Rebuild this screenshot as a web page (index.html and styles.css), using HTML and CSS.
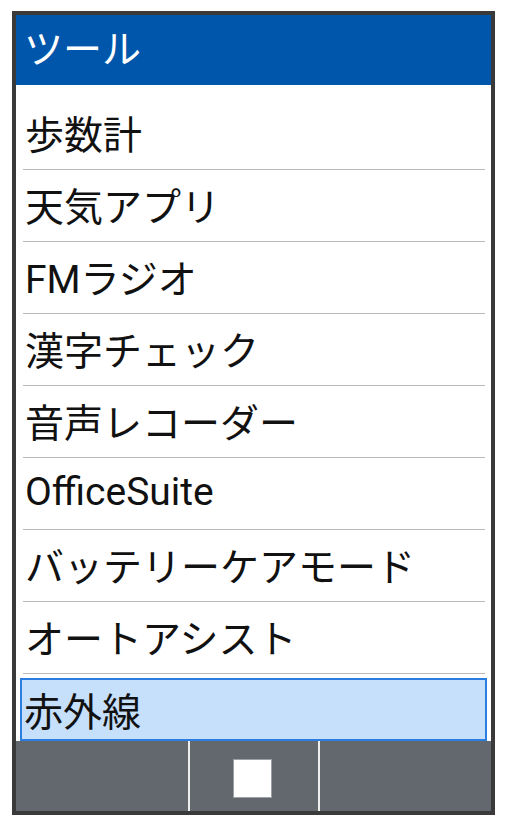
FILE: index.html
```html
<!DOCTYPE html>
<html lang="ja">
<head>
<meta charset="utf-8">
<title>ツール</title>
<link rel="stylesheet" href="styles.css">
</head>
<body>
<div class="device">
  <header class="title">ツール</header>
  <ul class="list">
    <li class="item">歩数計</li>
    <li class="item">天気アプリ</li>
    <li class="item">FMラジオ</li>
    <li class="item">漢字チェック</li>
    <li class="item">音声レコーダー</li>
    <li class="item">OfficeSuite</li>
    <li class="item">バッテリーケアモード</li>
    <li class="item">オートアシスト</li>
    <li class="item selected">赤外線</li>
  </ul>
  <div class="softkeys">
    <div class="key key-left"></div>
    <div class="divider"></div>
    <div class="key key-center"><span class="square"></span></div>
    <div class="divider"></div>
    <div class="key key-right"></div>
  </div>
</div>
</body>
</html>
```
FILE: styles.css
```css
html, body {
  margin: 0;
  padding: 0;
  background: #ffffff;
}

body {
  font-family: Roboto, "Noto Sans CJK JP", sans-serif;
}

.device {
  margin: 11px 0 0 12px;
  width: 475px;
  height: 796px;
  border: 4px solid #3a3a3a;
  display: flex;
  flex-direction: column;
  background: #ffffff;
}

.title {
  height: 70px;
  flex: none;
  background: #0056aa;
  color: #ffffff;
  font-size: 39px;
  line-height: 70px;
  padding-left: 8px;
  white-space: nowrap;
}

.list {
  list-style: none;
  margin: 0;
  padding: 13px 0 0 0;
  flex: 1;
  overflow: hidden;
}

.item {
  height: 71px;
  box-sizing: border-box;
  margin: 0 6px 0 7px;
  padding: 0 0 3px 2px;
  border-bottom: 1px solid #b9b9b9;
  display: flex;
  align-items: center;
  font-size: 39px;
  color: #111111;
  white-space: nowrap;
  height: 72px;
}

.item.selected {
  height: 63px;
  margin: 4px 4px 0 4px;
  padding: 0 0 2px 2px;
  border: 2px solid #2b7de0;
  background: #c6dffb;
}

.softkeys {
  height: 70px;
  flex: none;
  background: #62686e;
  display: flex;
}

.key-left {
  width: 172px;
}

.divider {
  width: 2px;
  background: #eeeeee;
}

.key-center {
  width: 128px;
  padding: 18px 0 0 43px;
  box-sizing: border-box;
}

.key-right {
  flex: 1;
}

.square {
  display: block;
  width: 39px;
  height: 39px;
  box-sizing: border-box;
  background: #ffffff;
  border: 1px solid #9aa0a5;
}
```
